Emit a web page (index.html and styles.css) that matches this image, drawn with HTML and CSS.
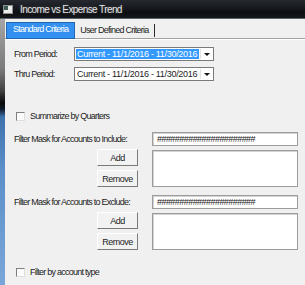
FILE: index.html
```html
<!DOCTYPE html>
<html lang="en">

<head>
	<meta charset="UTF-8" />
	<title>Income vs Expense Trend</title>
	<link rel="stylesheet" href="styles.css">
</head>

<body>
	<div class="titlebar">
		<svg class="app-icon" width="10" height="9" viewBox="0 0 10 9">
			<rect x="0.5" y="0.5" width="9" height="8" fill="#e9ece9" stroke="#8d948f" />
			<rect x="1" y="1" width="4" height="4" fill="#3d5c52" />
		</svg>
		<span class="title">Income vs Expense Trend</span>
	</div>

	<div class="frame">
		<div class="frame-edge"></div>
		<div class="client">
			<div class="tabs">
				<div class="tab active">Standard Criteria</div>
				<div class="tab">User Defined Criteria</div>
			</div>

			<div class="tab-page">
				<div class="period-row">
					<span class="period-label">From Period:</span>
					<div class="combo">
						<span class="combo-text selected">Current - 11/1/2016 - 11/30/2016</span>
						<span class="combo-arrow"></span>
					</div>
				</div>
				<div class="period-row second">
					<span class="period-label">Thru Period:</span>
					<div class="combo">
						<span class="combo-text">Current - 11/1/2016 - 11/30/2016</span>
						<span class="combo-arrow"></span>
					</div>
				</div>

				<label class="check-row quarters">
					<span class="checkbox"></span>
					<span>Summarize by Quarters</span>
				</label>

				<div class="mask-row include">
					<span class="mask-label">Filter Mask for Accounts to Include:</span>
					<div class="field">######################</div>
				</div>
				<div class="list-row">
					<div class="btn-col">
						<button class="btn">Add</button>
						<button class="btn">Remove</button>
					</div>
					<div class="listbox"></div>
				</div>

				<div class="mask-row exclude">
					<span class="mask-label">Filter Mask for Accounts to Exclude:</span>
					<div class="field">######################</div>
				</div>
				<div class="list-row">
					<div class="btn-col">
						<button class="btn">Add</button>
						<button class="btn">Remove</button>
					</div>
					<div class="listbox"></div>
				</div>

				<label class="check-row account-type">
					<span class="checkbox"></span>
					<span>Filter by account type</span>
				</label>
			</div>
		</div>
	</div>
</body>

</html>
```

FILE: styles.css
```css
body {
	margin: 0;
	width: 305px;
	height: 285px;
	overflow: hidden;
	font-family: "Liberation Sans", Arial, sans-serif;
	font-size: 9px;
	letter-spacing: -0.75px;
	color: #1c1c1c;
	background-color: #f0f0f0;
	white-space: nowrap;
}

.titlebar {
	height: 19px;
	box-sizing: border-box;
	display: flex;
	align-items: center;
	gap: 7px;
	padding-left: 3px;
	background: linear-gradient(to bottom, #262a30, #0c0e12 70%, #15181c);
	border-bottom: 1px solid #5e6368;
}

.app-icon {
	display: block;
}

.title {
	color: #e4e4e4;
	font-size: 10px;
	letter-spacing: -0.6px;
	text-shadow: 0 0 3px rgba(255, 255, 255, 0.25);
}

.frame {
	display: flex;
	height: 266px;
}

.frame-edge {
	width: 5px;
	background: linear-gradient(to bottom, #a5a5a5 0, #7a7a7a 50px, #404040 72px, #08090b 84px, #0e1a28 90px, #3f72ad 98px, #5b8fc9 150px, #79a6d8 266px);
}

.client {
	flex: 1;
	background-color: #f0f0f0;
}

.tabs {
	height: 19px;
	box-sizing: border-box;
	display: flex;
	align-items: flex-start;
	padding: 3px 0 0 1px;
}

.tab {
	height: 13px;
	margin-top: 2px;
	line-height: 13px;
	padding: 0 5px;
	border-right: 1px solid #2b2b2b;
}

.tab.active {
	height: 15px;
	margin-top: 0;
	line-height: 13px;
	padding: 0 6px;
	background-color: #3390f0;
	color: #fff;
	border: 1px solid #2366b4;
}

.tab-page {
	border-top: 1px solid #a3a3a3;
	box-shadow: inset 0 1px 0 #fff;
	padding: 8px 0 0 9px;
}

.period-row {
	display: flex;
	align-items: center;
	height: 14px;
}

.period-row.second {
	margin-top: 6px;
}

.period-label {
	width: 60px;
}

.combo {
	width: 140px;
	height: 14px;
	box-sizing: border-box;
	display: flex;
	padding: 1px;
	background-color: #fff;
	border: 1px solid #7a7a7a;
}

.combo-text {
	flex: 1;
	line-height: 10px;
	padding-left: 1px;
	letter-spacing: -0.3px;
	overflow: hidden;
}

.combo-text.selected {
	background-color: #3399ff;
	color: #fff;
}

.combo-arrow {
	width: 11px;
	margin-left: 1px;
	display: flex;
	align-items: center;
	justify-content: center;
	border-left: 1px solid #e2e2e2;
}

.combo-arrow::after {
	content: "";
	border-left: 3px solid transparent;
	border-right: 3px solid transparent;
	border-top: 3px solid #111;
}

.check-row {
	display: flex;
	align-items: center;
	gap: 5px;
	height: 14px;
	padding-left: 2px;
}

.check-row.quarters {
	margin-top: 28px;
}

.check-row.account-type {
	margin-top: 15px;
}

.checkbox {
	width: 9px;
	height: 9px;
	box-sizing: border-box;
	background-color: #fbfbfb;
	border: 1px solid;
	border-color: #7e7e7e #dedede #dedede #7e7e7e;
}

.mask-row,
.list-row {
	display: grid;
	grid-template-columns: 124px 146px;
	column-gap: 14px;
}

.mask-row {
	align-items: center;
	height: 14px;
}

.mask-row.include {
	margin-top: 9px;
}

.mask-row.exclude {
	margin-top: 8px;
}

.field,
.listbox {
	box-sizing: border-box;
	background-color: #fff;
	border: 1px solid #9c9c9c;
	box-shadow: inset 1px 1px 0 #d4d4d4;
}

.field {
	height: 14px;
	line-height: 12px;
	padding-left: 4px;
	letter-spacing: -0.55px;
	overflow: hidden;
}

.list-row {
	margin-top: 3px;
}

.btn-col {
	display: flex;
	flex-direction: column;
	align-items: flex-end;
	gap: 4px;
}

.btn {
	width: 41px;
	height: 17px;
	padding: 0;
	font-family: inherit;
	font-size: 9px;
	letter-spacing: -0.5px;
	color: #1c1c1c;
	background-color: #f2f2f2;
	border: 1px solid;
	border-color: #fff #7a7a7a #7a7a7a #fff;
}

.listbox {
	margin-top: 1px;
	height: 37px;
}
```
